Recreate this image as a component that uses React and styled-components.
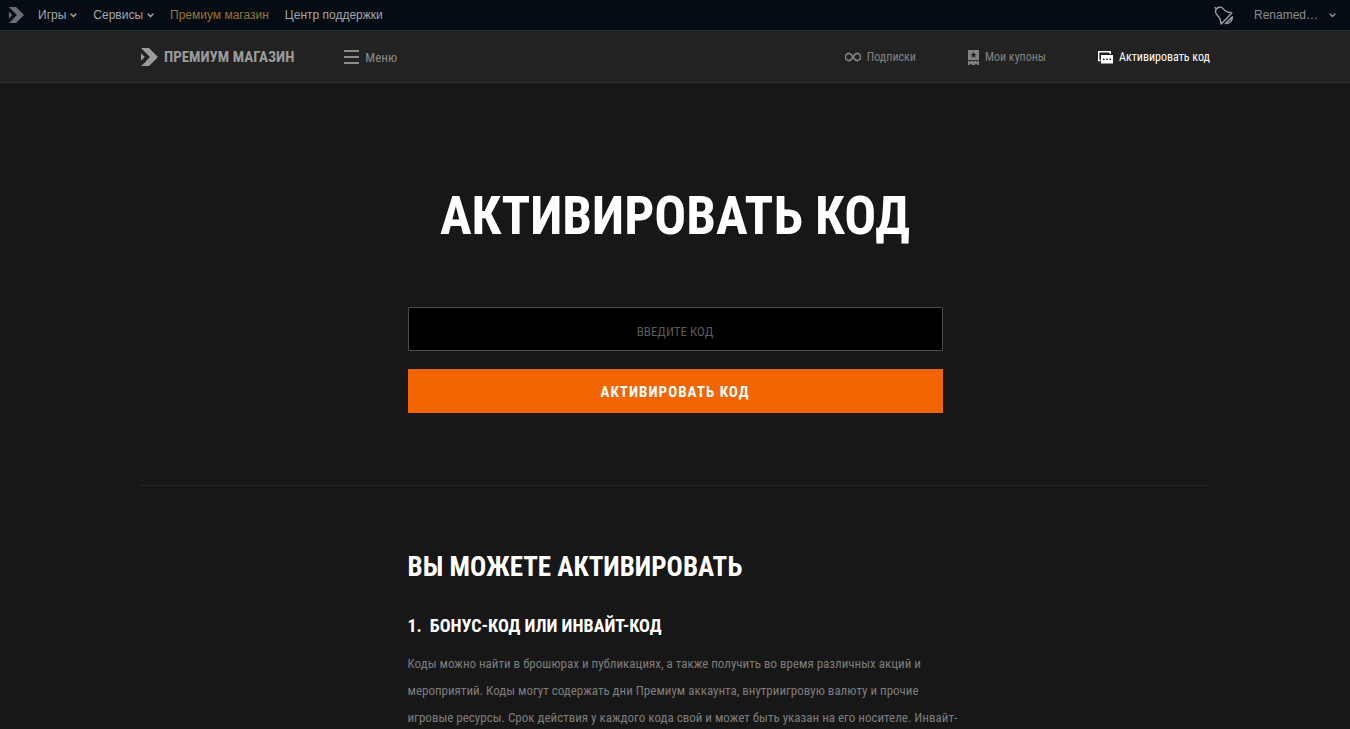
import React, { useState } from 'react';
import styled, { createGlobalStyle } from 'styled-components';

const dropdowns = ['Игры', 'Сервисы'];

function ArrowLogo({ size }) {
  return (
    <svg width={size} height={size} viewBox='0 0 18 18' fill='currentColor'>
      <path d='M1 0h8l9 9-9 9H1l5-4.6V13l4-4-4-4z' />
      <path d='M1 5.2v7.6L4.8 9z' />
    </svg>
  );
}

function Chevron() {
  return (
    <svg width='7' height='5' viewBox='0 0 7 5' fill='none'>
      <path d='M.6.8 3.5 3.6 6.4.8' stroke='currentColor' strokeWidth='1.4' />
    </svg>
  );
}

function BellIcon() {
  return (
    <svg
      width='20'
      height='20'
      viewBox='0 0 20 20'
      fill='none'
      stroke='currentColor'
      strokeWidth='1.4'
      strokeLinejoin='round'
      strokeLinecap='round'
    >
      <path d='M1 2.600 2.400 3.800' />
      <path d='M2.400 3.800C4 1.900 7 1.600 8.600 3.200c1.500 1.700 2.800 3.400 5 3.800l4.200.9L7.200 19 6 14.200C5.400 12 3.600 11 2.400 9 1.400 7.400 1.200 5.400 2.400 3.800z' />
      <path d='M18.400 11.800c.2 3.600-3.200 7.200-7 6.800z' />
    </svg>
  );
}

function InfinityIcon() {
  return (
    <svg
      width='16'
      height='10'
      viewBox='0 0 16 10'
      fill='none'
      stroke='currentColor'
      strokeWidth='1.600'
    >
      <path d='M8 5C6.600 2.800 5.600 1.400 4 1.400a3.600 3.600 0 0 0 0 7.200C5.600 8.600 6.600 7.200 8 5s2.400-3.600 4-3.600a3.600 3.600 0 0 1 0 7.200C10.400 8.600 9.400 7.200 8 5z' />
    </svg>
  );
}

function CouponIcon() {
  return (
    <svg width='11' height='15' viewBox='0 0 11 15' fill='currentColor'>
      <path
        fillRule='evenodd'
        d='M0 0h11v10H0zM5.500 1.700 4.600 4H2.200l1.900 1.500-.7 2.400 2.100-1.400 2.100 1.400-.7-2.400L8.800 4H6.400z'
      />
      <path d='M0 10.800h1l1 1 1-1h1.500l1 1 1-1H8l1 1 1-1h1V15H9.500L8 13.600 6.800 15H4.200L3 13.600 1.500 15H0z' />
    </svg>
  );
}

function CodeIcon() {
  return (
    <svg width='15' height='13' viewBox='0 0 15 13'>
      <path
        d='M2.500 9.500H.7V.7h11.600V3'
        fill='none'
        stroke='currentColor'
        strokeWidth='1.400'
      />
      <path
        fill='currentColor'
        fillRule='evenodd'
        d='M3 4h12v8.500H3zM5 7.500v1.600h1.600V7.500zm3.200 0v1.600h1.600V7.500zm3.200 0v1.600H13V7.500z'
      />
    </svg>
  );
}

function MenuIcon() {
  return (
    <svg width='15' height='14' viewBox='0 0 15 14' fill='currentColor'>
      <path d='M0 0h15v2H0zM0 6h15v2H0zM0 12h15v2H0z' />
    </svg>
  );
}

function App() {
  const [code, setCode] = useState('');

  const handleSubmit = (event) => {
    event.preventDefault();
    setCode('');
  };

  return (
    <>
      <GlobalStyle />
      <TopBar>
        <TopLogo href='#' aria-label='Главная'>
          <ArrowLogo size={16} />
        </TopLogo>
        <TopNav>
          {dropdowns.map((name) => (
            <TopButton key={name} type='button'>
              {name}
              <Chevron />
            </TopButton>
          ))}
          <TopLink href='#' $active>
            Премиум магазин
          </TopLink>
          <TopLink href='#'>Центр поддержки</TopLink>
        </TopNav>
        <BellButton type='button' aria-label='Уведомления'>
          <BellIcon />
        </BellButton>
        <UserButton type='button'>
          Renamed…
          <Chevron />
        </UserButton>
      </TopBar>

      <ShopBar>
        <ShopInner>
          <Brand href='#'>
            <ArrowLogo size={18} />
            ПРЕМИУМ МАГАЗИН
          </Brand>
          <MenuButton type='button'>
            <MenuIcon />
            Меню
          </MenuButton>
          <ShopNav>
            <ShopLink href='#'>
              <InfinityIcon />
              Подписки
            </ShopLink>
            <ShopLink href='#'>
              <CouponIcon />
              Мои купоны
            </ShopLink>
            <ShopLink href='#' $active>
              <CodeIcon />
              Активировать код
            </ShopLink>
          </ShopNav>
        </ShopInner>
      </ShopBar>

      <Content>
        <Title>АКТИВИРОВАТЬ КОД</Title>
        <CodeForm onSubmit={handleSubmit}>
          <CodeInput
            type='text'
            aria-label='Введите код'
            placeholder='ВВЕДИТЕ КОД'
            value={code}
            onChange={(event) => setCode(event.target.value)}
          />
          <SubmitButton type='submit'>АКТИВИРОВАТЬ КОД</SubmitButton>
        </CodeForm>
        <Divider />
        <Info>
          <InfoTitle>ВЫ МОЖЕТЕ АКТИВИРОВАТЬ</InfoTitle>
          <InfoSubtitle>
            <span>1.</span>
            БОНУС-КОД ИЛИ ИНВАЙТ-КОД
          </InfoSubtitle>
          <InfoText>
            Коды можно найти в брошюрах и публикациях, а также получить во время
            различных акций и
            <br />
            мероприятий. Коды могут содержать дни Премиум аккаунта,
            внутриигровую валюту и прочие
            <br />
            игровые ресурсы. Срок действия у каждого кода свой и может быть
            указан на его носителе. Инвайт-
          </InfoText>
        </Info>
      </Content>
    </>
  );
}

const GlobalStyle = createGlobalStyle`
  * {
    box-sizing: border-box;
  }
  html {
    scrollbar-width: none;
  }
  body {
    margin: 0;
    background-color: #171717;
    color: #8c8c8c;
    font-family: 'Roboto Condensed', 'Arial Narrow', Roboto, sans-serif;
    font-size: 13px;
  }
  a {
    text-decoration: none;
  }
  button {
    padding: 0;
    border: none;
    background: none;
    font: inherit;
    cursor: pointer;
  }
  svg {
    display: block;
    flex-shrink: 0;
  }
`;

const TopBar = styled.header`
  display: flex;
  align-items: center;
  height: 31px;
  padding: 0 14px 0 8px;
  border-bottom: 1px solid #2a2f32;
  background-color: #050c13;
  color: #a3a7aa;
  font-family: 'Liberation Sans', sans-serif;
  font-size: 12px;
`;

const TopLogo = styled.a`
  margin-right: 14px;
  color: #6b6e72;
`;

const TopNav = styled.nav`
  display: flex;
  align-items: center;
  gap: 16px;
`;

const TopButton = styled.button`
  display: flex;
  align-items: center;
  gap: 4px;
  color: inherit;
`;

const TopLink = styled.a`
  color: ${({ $active }) => ($active ? '#957636' : 'inherit')};
`;

const BellButton = styled.button`
  margin-left: auto;
  color: #9a9da0;
`;

const UserButton = styled.button`
  display: flex;
  align-items: center;
  gap: 11px;
  margin-left: 20px;
  color: #8b8f92;
`;

const ShopBar = styled.div`
  padding: 0 140px;
  border-bottom: 1px solid #2e3031;
  background-color: #222;
`;

const ShopInner = styled.div`
  display: flex;
  align-items: center;
  max-width: 1070px;
  height: 51px;
  margin: 0 auto;
  padding-top: 1px;
`;

const Brand = styled.a`
  display: flex;
  align-items: center;
  gap: 6px;
  color: #9b9b9b;
  font-size: 15px;
  font-weight: bold;
`;

const MenuButton = styled.button`
  display: flex;
  align-items: center;
  gap: 6px;
  margin-left: 50px;
  color: #8c8c8c;
`;

const ShopNav = styled.nav`
  display: flex;
  gap: 52px;
  margin-left: auto;
`;

const ShopLink = styled.a`
  display: flex;
  align-items: center;
  gap: 6px;
  color: ${({ $active }) => ($active ? '#fff' : '#828282')};
  font-size: 12px;
`;

const Content = styled.main`
  max-width: 1070px;
  margin: 0 auto;
  padding-top: 97px;
`;

const Title = styled.h1`
  margin: 0;
  color: #fff;
  font-size: 53px;
  line-height: 72px;
  text-align: center;
`;

const CodeForm = styled.form`
  display: flex;
  flex-direction: column;
  gap: 18px;
  width: 50%;
  margin: 55px auto 0;
`;

const CodeInput = styled.input`
  height: 44px;
  padding: 4px 16px 0;
  border: 1px solid #4d4d4d;
  border-radius: 1px;
  outline: none;
  background-color: #000;
  color: #fff;
  font: inherit;
  text-align: center;
  &::placeholder {
    color: #595959;
    opacity: 1;
  }
`;

const SubmitButton = styled.button`
  height: 44px;
  padding-top: 2px;
  background-color: #f36500;
  color: #fff;
  font-size: 15px;
  font-weight: bold;
  letter-spacing: 1px;
`;

const Divider = styled.hr`
  height: 1px;
  margin: 72px 0 0;
  border: none;
  background-color: #262626;
`;

const Info = styled.section`
  width: 50%;
  margin: 0 auto;
  padding-top: 63px;
`;

const InfoTitle = styled.h2`
  margin: 0;
  color: #fff;
  font-size: 27px;
  line-height: 36px;
`;

const InfoSubtitle = styled.h3`
  display: flex;
  gap: 8px;
  margin: 27px 0 11px;
  color: #fff;
  font-size: 18px;
  line-height: 27px;
`;

const InfoText = styled.p`
  margin: 0;
  color: #7d7d7d;
  line-height: 27px;
  white-space: nowrap;
`;

export default App;
